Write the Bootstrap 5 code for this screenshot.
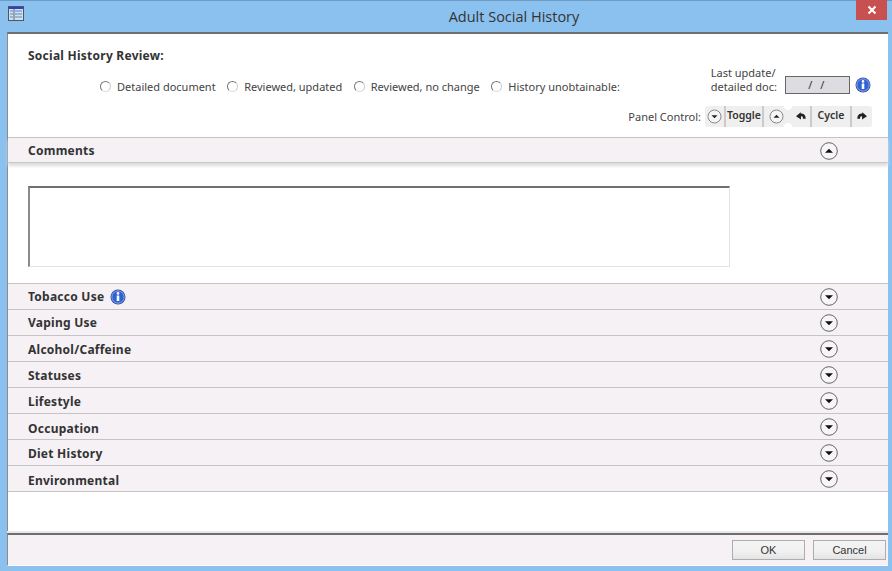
<!DOCTYPE html>
<html lang="en">
<head>
<meta charset="utf-8">
<title>Adult Social History</title>
<link rel="stylesheet" href="https://cdn.jsdelivr.net/npm/bootstrap@5.3.0/dist/css/bootstrap.min.css">
<style>
html,body{height:571px;overflow:hidden;margin:0}
body{background:#8bc1ef;font-family:"Noto Sans","DejaVu Sans",sans-serif;font-size:11px;letter-spacing:0;color:#333;line-height:14px}
.shell{height:571px}
.titlebar{height:32px;border-top:1px solid #6f9cc4;flex:none;padding-left:8px;padding-right:5px}
.apptitle{font-size:14.5px;color:#333;font-family:"Open Sans","Liberation Sans",sans-serif;padding:6px 0 0 148px;line-height:20px}
.closebtn{width:31px;height:20px;margin-top:-1px;background:#c75050;color:#fff;border:0;padding:0}
.mainarea{margin:0 4px 0 7px;background:#fff;border-top:2px solid #6f6f6f;border-left:1px solid #8a8a8a;height:501px;flex:none}
.head{height:103px;flex:none;padding:0 16px 0 20px}
.heading{font-weight:700;font-size:12px;letter-spacing:.25px;padding-top:15px}
.opts{gap:11.5px;padding-left:72px;margin-top:15px;color:#444}
.opt{gap:6px;white-space:nowrap}
.opt-text{padding-top:2px}
.radiomark{width:11px;height:11px;border-radius:50%;border:1px solid #777;border-bottom-color:#ddd;border-right-color:#ccc;flex:none;background:#fff}
.updatelabel{line-height:14px;color:#444;white-space:nowrap;padding-left:1px}
.dateval{width:65px;height:18px;background:#dddce0;border:1px solid #666;color:#333;letter-spacing:2.5px}
.toolgrp{width:167px;height:21px;color:#333;border-radius:3px;background:radial-gradient(circle 4px at 83px 0,#fff 96%,transparent),radial-gradient(circle 4px at 83px 100%,#fff 96%,transparent),#efefef}
.toolseg{height:21px;border-right:2px solid #cfcaca;box-sizing:border-box}
.toolseg-none{border-right:0}
.w21{width:21px}.w38{width:38px}.w24{width:24px}.w40{width:40px}.w20{width:20px}
.toolbold{font-weight:600;font-size:10.5px;padding-bottom:3px}
.paneltext{color:#444;margin-right:4px;white-space:nowrap}
.sect{height:26px;background:#f5f1f5;border-top:1px solid #c4c4c4;padding-left:20px;padding-right:50px;font-weight:700;font-size:12px;letter-spacing:.25px;color:#333;flex:none}
.sect-lab{padding-top:2px}
.sect-low{padding-top:4px}
.sect-open{border-bottom:1px solid #c8c8c8;box-shadow:0 3px 3px #ddd;position:relative}
.sect-end{height:27px;border-bottom:1px solid #c4c4c4}
.notebox{height:120px;flex:none;padding:23px 0 0 20px}
.notearea{width:702px;height:81px;border:1px solid #e3e3e3;border-top:2px solid #6f6f6f;border-left:2px solid #8a8a8a;background:#fff;display:block;resize:none;padding:0}
.gapfill{flex:1 1 auto}
.footbar{height:33px;margin:0 4px 0 7px;background:#f5f1f5;border-top:2px solid #6f6f6f;border-left:1px solid #8a8a8a;border-bottom:1px solid #fff;padding-right:2px;gap:8px;flex:none;box-shadow:0 -2px 0 #e8e8e8}
.winbtn{width:73px;height:20px;background:linear-gradient(#f4f4f4,#f0f0f0 60%,#e4e4e4);border:1px solid #adadad;border-radius:0;padding:0;font-size:11px;line-height:18px;color:#333;font-family:"Liberation Sans",sans-serif}
.icosvg{display:block;flex:none}
.infogap{margin-left:1px;margin-right:1px;margin-bottom:1px}
.infoshift{margin-left:2px}
.nudge{margin-top:1px}
</style>
</head>
<body>
<div class="shell d-flex flex-column">
  <div class="titlebar d-flex align-items-start">
    <svg class="icosvg mt-1" width="16" height="16" viewBox="0 0 16 16"><rect x=".5" y="1.5" width="15" height="14" fill="#cfe0f2" stroke="#555"/><rect x="1" y="2" width="14" height="2" fill="#2b3fd8"/><path d="M2 6h3M2 9h3M2 12h3M7 6h7M7 9h7M7 12h7" stroke="#7fa6cf" stroke-width="1.4"/><path d="M6 4v11" stroke="#666"/></svg>
    <div class="apptitle flex-grow-1 text-center">Adult Social History</div>
    <button class="closebtn d-flex align-items-center justify-content-center" type="button" aria-label="Close"><svg width="10" height="10" viewBox="0 0 10 10"><path d="M1.5 1.5l7 7M8.5 1.5l-7 7" stroke="#fff" stroke-width="2"/></svg></button>
  </div>

  <div class="mainarea d-flex flex-column">
    <div class="head d-flex justify-content-between">
      <div>
        <div class="heading">Social History Review:</div>
        <div class="opts d-flex">
          <label class="opt d-flex align-items-center"><span class="radiomark"></span><span class="opt-text">Detailed document</span></label>
          <label class="opt d-flex align-items-center"><span class="radiomark"></span><span class="opt-text">Reviewed, updated</span></label>
          <label class="opt d-flex align-items-center"><span class="radiomark"></span><span class="opt-text">Reviewed, no change</span></label>
          <label class="opt d-flex align-items-center"><span class="radiomark"></span><span class="opt-text">History unobtainable:</span></label>
        </div>
      </div>
      <div class="d-flex flex-column align-items-end">
        <div class="d-flex align-items-end gap-1" style="margin-top:32px">
          <div class="updatelabel me-1">Last update/<br>detailed doc:</div>
          <div class="dateval d-flex align-items-center justify-content-center">/ /</div>
          <svg class="icosvg infogap" width="16" height="16" viewBox="0 0 16 16"><circle cx="8" cy="8" r="7.500" fill="#2a46a8"/><circle cx="8" cy="8" r="6.200" fill="#2f62d4" stroke="#a9c0ee" stroke-width=".8"/><rect x="6.700" y="6.500" width="2.600" height="5.500" fill="#fff"/><circle cx="8" cy="4.400" r="1.300" fill="#fff"/></svg>
        </div>
        <div class="d-flex align-items-center" style="margin-top:12px">
          <span class="paneltext">Panel Control:</span>
          <div class="toolgrp d-flex align-items-center">
            <div class="toolseg w21 d-flex align-items-center justify-content-center"><svg class="icosvg" width="15" height="15" viewBox="0 0 15 15"><circle cx="7.500" cy="7.500" r="6.500" fill="#f5f5f5" stroke="#888"/><path d="M4.500 6.200h6l-3 3z" fill="#222"/></svg></div>
            <div class="toolseg w38 d-flex align-items-center justify-content-center toolbold">Toggle</div>
            <div class="toolseg toolseg-none w24 d-flex align-items-center justify-content-center"><svg class="icosvg" width="15" height="15" viewBox="0 0 15 15"><circle cx="7.500" cy="7.500" r="6.500" fill="#f5f5f5" stroke="#888"/><path d="M4.500 8.800h6l-3-3z" fill="#222"/></svg></div>
            <div class="toolseg w24 d-flex align-items-center justify-content-center ps-1"><svg class="icosvg" width="10" height="10" viewBox="0 0 10 10"><path d="M0 4.300L4.800 .3l.2 7.200z" fill="#222"/><path d="M3.500 3.500C6 2 8.300 3 8.400 6.800" fill="none" stroke="#222" stroke-width="2.800"/></svg></div>
            <div class="toolseg w40 d-flex align-items-center justify-content-center toolbold">Cycle</div>
            <div class="toolseg toolseg-none w20 d-flex align-items-center justify-content-center"><svg class="icosvg" width="10" height="10" viewBox="0 0 10 10"><path d="M10 4.300L5.200 .3 5 7.500z" fill="#222"/><path d="M6.500 3.500C4 2 1.700 3 1.600 6.800" fill="none" stroke="#222" stroke-width="2.800"/></svg></div>
          </div>
        </div>
      </div>
    </div>

    <div class="sect sect-open d-flex align-items-center justify-content-between"><span class="sect-lab">Comments</span>
      <svg class="icosvg nudge" width="18" height="18" viewBox="0 0 18 18"><circle cx="9" cy="9" r="8.300" fill="#f7f5f7" stroke="#666"/><path d="M5 10.800h8L9 6.800z" fill="#111"/></svg></div>
    <div class="notebox"><textarea class="notearea" aria-label="Comments"></textarea></div>

    <div class="sect d-flex align-items-center justify-content-between"><span class="d-flex align-items-center gap-1">Tobacco Use <svg class="icosvg infoshift" width="16" height="16" viewBox="0 0 16 16"><circle cx="8" cy="8" r="7.500" fill="#2a46a8"/><circle cx="8" cy="8" r="6.200" fill="#2f62d4" stroke="#a9c0ee" stroke-width=".8"/><rect x="6.700" y="6.500" width="2.600" height="5.500" fill="#fff"/><circle cx="8" cy="4.400" r="1.300" fill="#fff"/></svg></span><svg class="icosvg" width="18" height="18" viewBox="0 0 18 18"><circle cx="9" cy="9" r="8.300" fill="#f7f5f7" stroke="#666"/><path d="M5 7.200h8L9 11.200z" fill="#111"/></svg></div>
    <div class="sect d-flex align-items-center justify-content-between"><span>Vaping Use</span><svg class="icosvg" width="18" height="18" viewBox="0 0 18 18"><circle cx="9" cy="9" r="8.300" fill="#f7f5f7" stroke="#666"/><path d="M5 7.200h8L9 11.200z" fill="#111"/></svg></div>
    <div class="sect d-flex align-items-center justify-content-between"><span class="sect-lab">Alcohol/Caffeine</span><svg class="icosvg" width="18" height="18" viewBox="0 0 18 18"><circle cx="9" cy="9" r="8.300" fill="#f7f5f7" stroke="#666"/><path d="M5 7.200h8L9 11.200z" fill="#111"/></svg></div>
    <div class="sect d-flex align-items-center justify-content-between"><span class="sect-lab">Statuses</span><svg class="icosvg" width="18" height="18" viewBox="0 0 18 18"><circle cx="9" cy="9" r="8.300" fill="#f7f5f7" stroke="#666"/><path d="M5 7.200h8L9 11.200z" fill="#111"/></svg></div>
    <div class="sect d-flex align-items-center justify-content-between"><span class="sect-lab">Lifestyle</span><svg class="icosvg" width="18" height="18" viewBox="0 0 18 18"><circle cx="9" cy="9" r="8.300" fill="#f7f5f7" stroke="#666"/><path d="M5 7.200h8L9 11.200z" fill="#111"/></svg></div>
    <div class="sect d-flex align-items-center justify-content-between"><span class="sect-low">Occupation</span><svg class="icosvg" width="18" height="18" viewBox="0 0 18 18"><circle cx="9" cy="9" r="8.300" fill="#f7f5f7" stroke="#666"/><path d="M5 7.200h8L9 11.200z" fill="#111"/></svg></div>
    <div class="sect d-flex align-items-center justify-content-between"><span class="sect-lab">Diet History</span><svg class="icosvg" width="18" height="18" viewBox="0 0 18 18"><circle cx="9" cy="9" r="8.300" fill="#f7f5f7" stroke="#666"/><path d="M5 7.200h8L9 11.200z" fill="#111"/></svg></div>
    <div class="sect sect-end d-flex align-items-center justify-content-between"><span class="sect-low">Environmental</span><svg class="icosvg" width="18" height="18" viewBox="0 0 18 18"><circle cx="9" cy="9" r="8.300" fill="#f7f5f7" stroke="#666"/><path d="M5 7.200h8L9 11.200z" fill="#111"/></svg></div>
    <div class="gapfill"></div>
  </div>

  <div class="footbar d-flex align-items-center justify-content-end">
    <button class="winbtn" type="button">OK</button>
    <button class="winbtn" type="button">Cancel</button>
  </div>
</div>
<script src="https://cdn.jsdelivr.net/npm/bootstrap@5.3.0/dist/js/bootstrap.bundle.min.js"></script>
</body>
</html>
